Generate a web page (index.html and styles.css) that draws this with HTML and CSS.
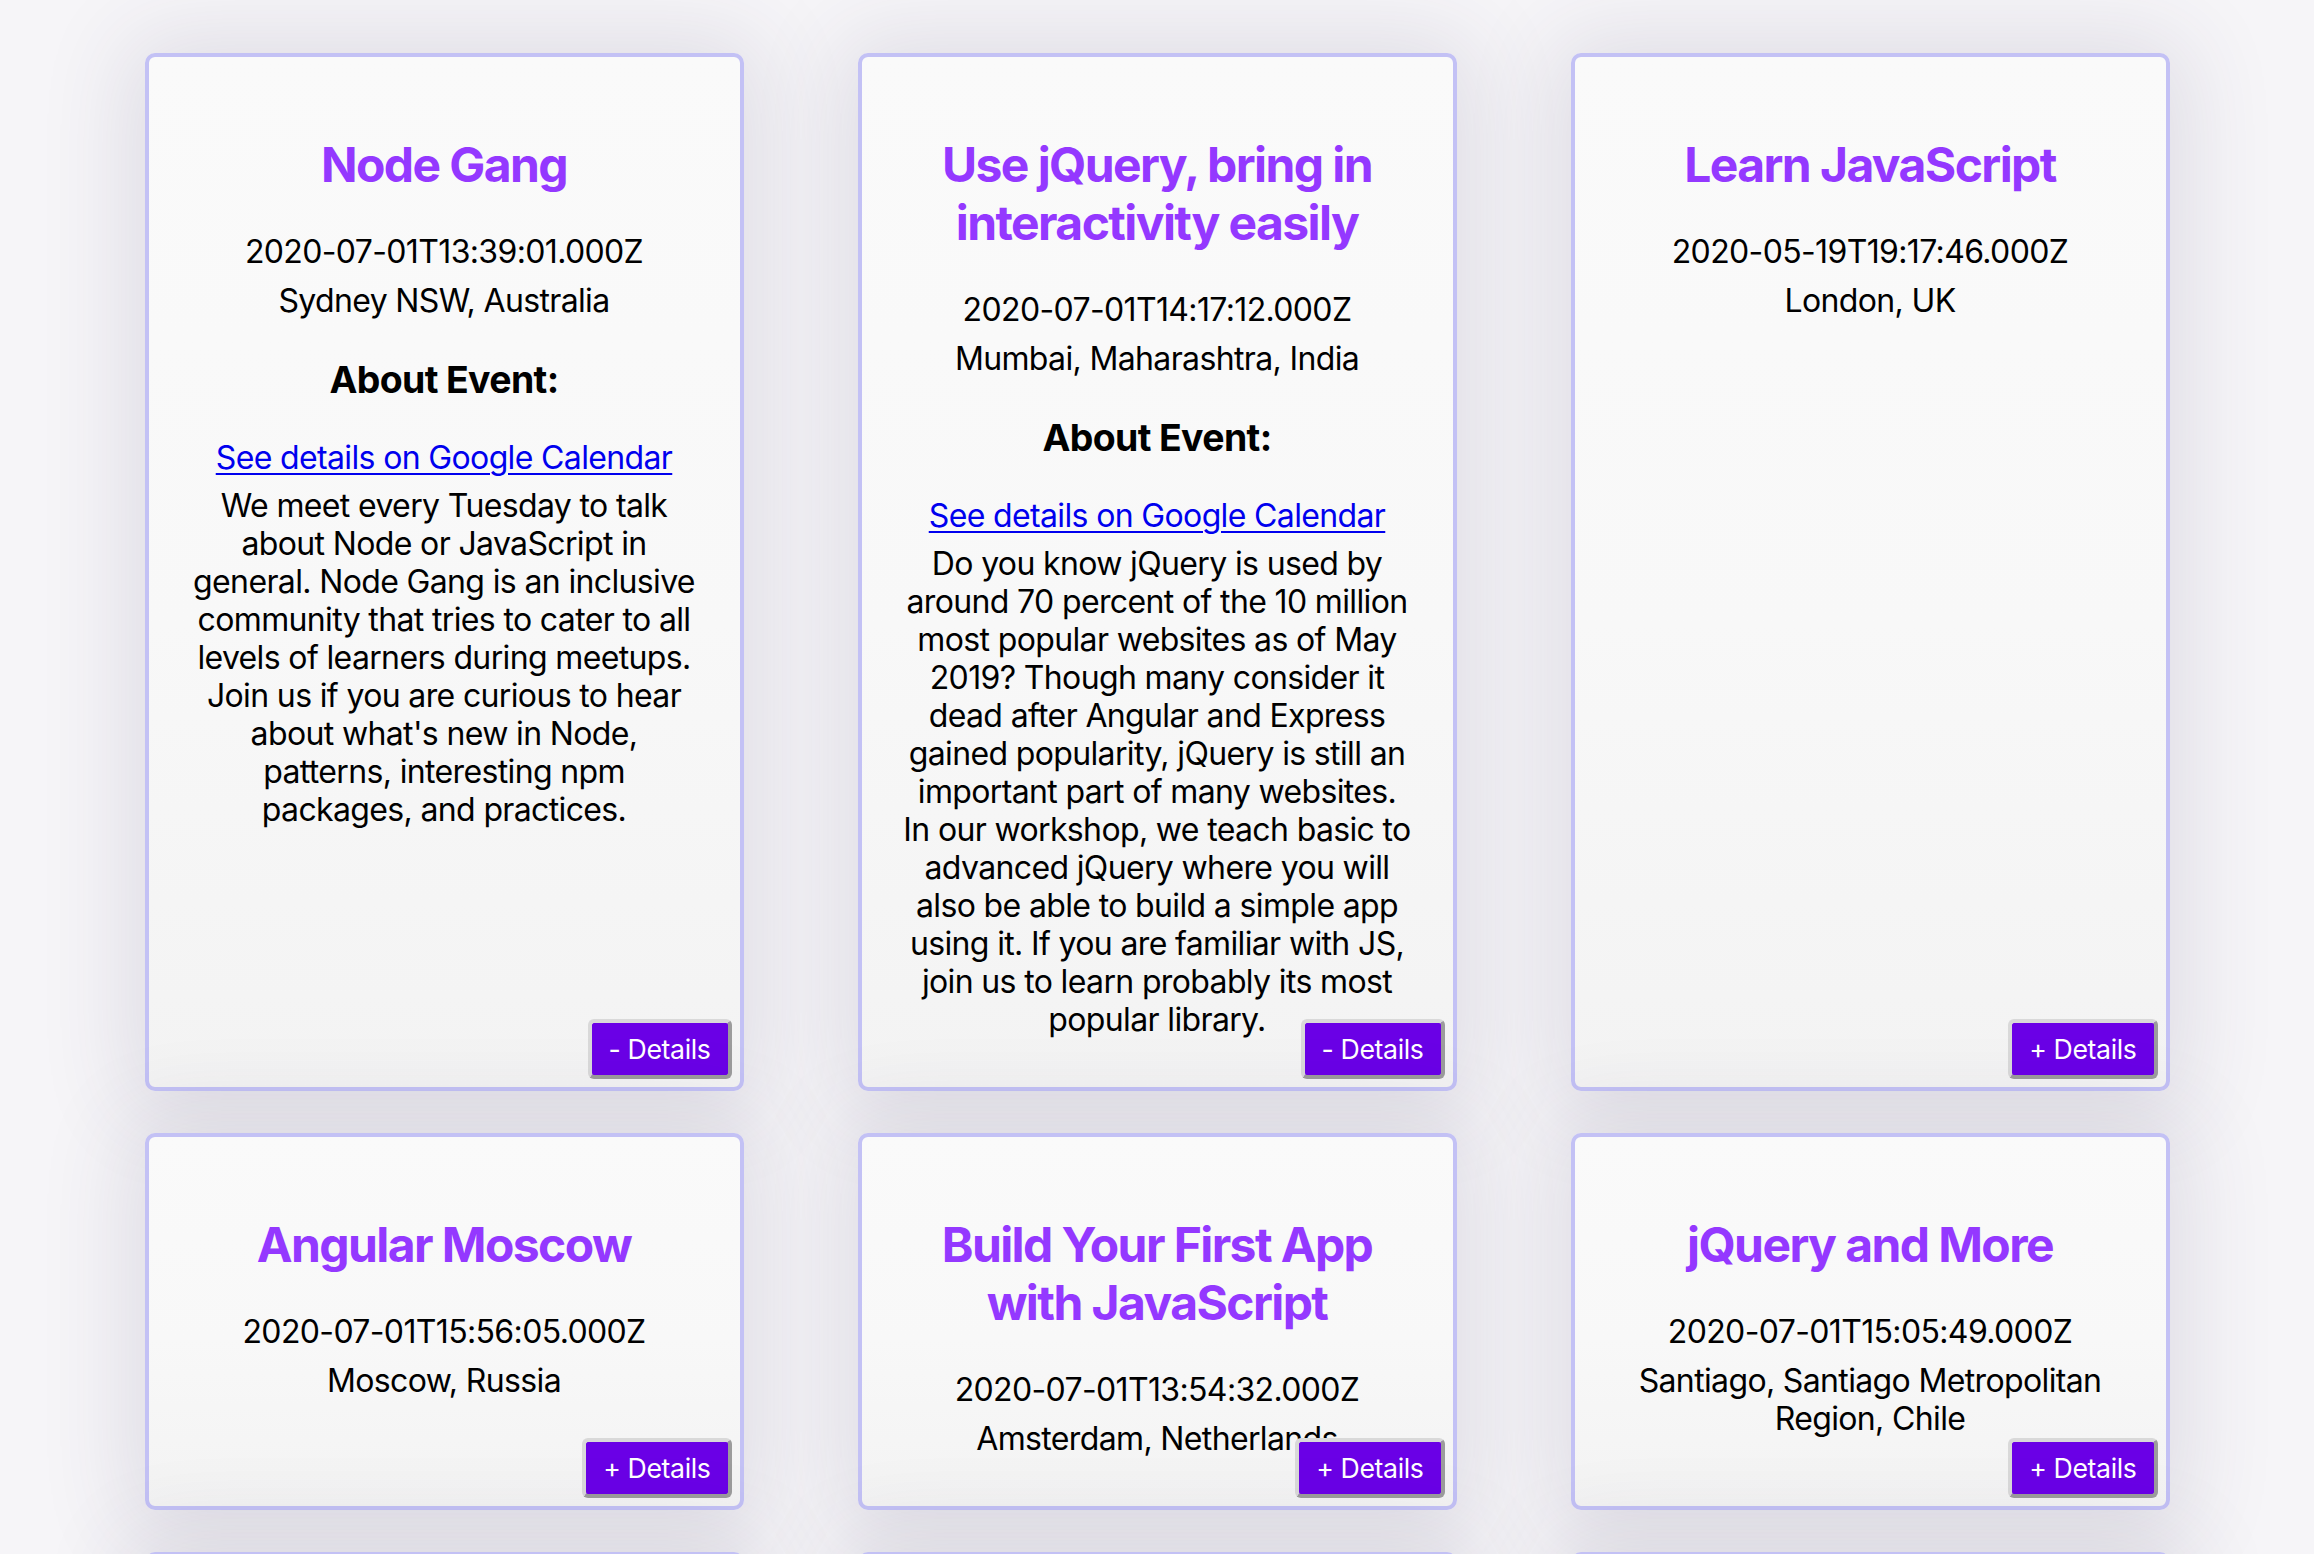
FILE: index.html
```html
<!DOCTYPE html>
<html lang="en">
<head>
<meta charset="utf-8">
<title>Events</title>
<link rel="stylesheet" href="styles.css">
</head>
<body>
<main class="events">
  <article class="card">
    <h2 class="card-title">Node Gang</h2>
    <p class="card-date">2020-07-01T13:39:01.000Z</p>
    <p class="card-location">Sydney NSW, Australia</p>
    <h3 class="card-about">About Event:</h3>
    <p class="card-link-row"><a class="card-link" href="#">See details on Google Calendar</a></p>
    <p class="card-desc">We meet every Tuesday to talk about Node or JavaScript in general. Node Gang is an inclusive community that tries to cater to all levels of learners during meetups. Join us if you are curious to hear about what's new in Node, patterns, interesting npm packages, and practices.</p>
    <button class="details-btn" type="button">- Details</button>
  </article>

  <article class="card">
    <h2 class="card-title">Use jQuery, bring in interactivity easily</h2>
    <p class="card-date">2020-07-01T14:17:12.000Z</p>
    <p class="card-location">Mumbai, Maharashtra, India</p>
    <h3 class="card-about">About Event:</h3>
    <p class="card-link-row"><a class="card-link" href="#">See details on Google Calendar</a></p>
    <p class="card-desc">Do you know jQuery is used by around 70 percent of the 10 million most popular websites as of May 2019? Though many consider it dead after Angular and Express gained popularity, jQuery is still an important part of many websites.<br>In our workshop, we teach basic to advanced jQuery where you will also be able to build a simple app using it. If you are familiar with JS, join us to learn probably its most popular library.</p>
    <button class="details-btn" type="button">- Details</button>
  </article>

  <article class="card">
    <h2 class="card-title">Learn JavaScript</h2>
    <p class="card-date">2020-05-19T19:17:46.000Z</p>
    <p class="card-location">London, UK</p>
    <button class="details-btn" type="button">+ Details</button>
  </article>

  <article class="card">
    <h2 class="card-title">Angular Moscow</h2>
    <p class="card-date">2020-07-01T15:56:05.000Z</p>
    <p class="card-location">Moscow, Russia</p>
    <button class="details-btn" type="button">+ Details</button>
  </article>

  <article class="card">
    <h2 class="card-title">Build Your First App with JavaScript</h2>
    <p class="card-date">2020-07-01T13:54:32.000Z</p>
    <p class="card-location">Amsterdam, Netherlands</p>
    <button class="details-btn" type="button">+ Details</button>
  </article>

  <article class="card">
    <h2 class="card-title">jQuery and More</h2>
    <p class="card-date">2020-07-01T15:05:49.000Z</p>
    <p class="card-location">Santiago, Santiago Metropolitan Region, Chile</p>
    <button class="details-btn" type="button">+ Details</button>
  </article>

  <article class="card card-next" aria-hidden="true"></article>
  <article class="card card-next" aria-hidden="true"></article>
  <article class="card card-next" aria-hidden="true"></article>
</main>
</body>
</html>
```
FILE: styles.css
```css
html, body {
  margin: 0;
  padding: 0;
}

body {
  background: #f6f5f8;
  font-family: Inter, "Liberation Sans", sans-serif;
  font-size: 32px;
  line-height: 38px;
  letter-spacing: -0.02em;
  color: #000;
}

.events {
  display: grid;
  grid-template-columns: repeat(3, 599px);
  column-gap: 114px;
  row-gap: 42px;
  justify-content: center;
  padding: 53px 0 60px;
}

.card {
  position: relative;
  box-sizing: border-box;
  border: 4px solid #c3c1f5;
  border-radius: 10px;
  background: linear-gradient(to bottom, #fafafa 0%, #f8f8f8 55%, #f3f3f3 100%);
  box-shadow: 0 4px 90px 18px rgba(60, 50, 90, 0.12);
  padding: 79px 41px 48px;
  text-align: center;
}

.card-next {
  height: 300px;
}

.card-title {
  margin: 0 0 39px;
  font-size: 48px;
  line-height: 58px;
  font-weight: 700;
  letter-spacing: -0.033em;
  color: #9438ff;
}

.card-date {
  margin: 0 0 11px;
}

.card-location {
  margin: 0;
}

.card-about {
  margin: 37px 0;
  font-size: 37.44px;
  line-height: 45px;
  font-weight: 700;
  letter-spacing: -0.017em;
}

.card-link-row {
  margin: 0 0 10px;
}

.card-link {
  color: #0000ee;
  text-decoration: underline;
  text-decoration-thickness: 2px;
  text-underline-offset: 4px;
}

.card-desc {
  margin: 0;
}

.details-btn {
  position: absolute;
  right: 8px;
  bottom: 8px;
  margin: 0;
  padding: 10px 17px;
  font-family: Inter, "Liberation Sans", sans-serif;
  font-size: 26.67px;
  line-height: 32px;
  letter-spacing: -0.014em;
  color: #fff;
  background: #6a00e6;
  border: 4px solid;
  border-color: #d9d9d9 #9c9c9c #9c9c9c #d9d9d9;
  border-radius: 6px;
  cursor: pointer;
}
```
